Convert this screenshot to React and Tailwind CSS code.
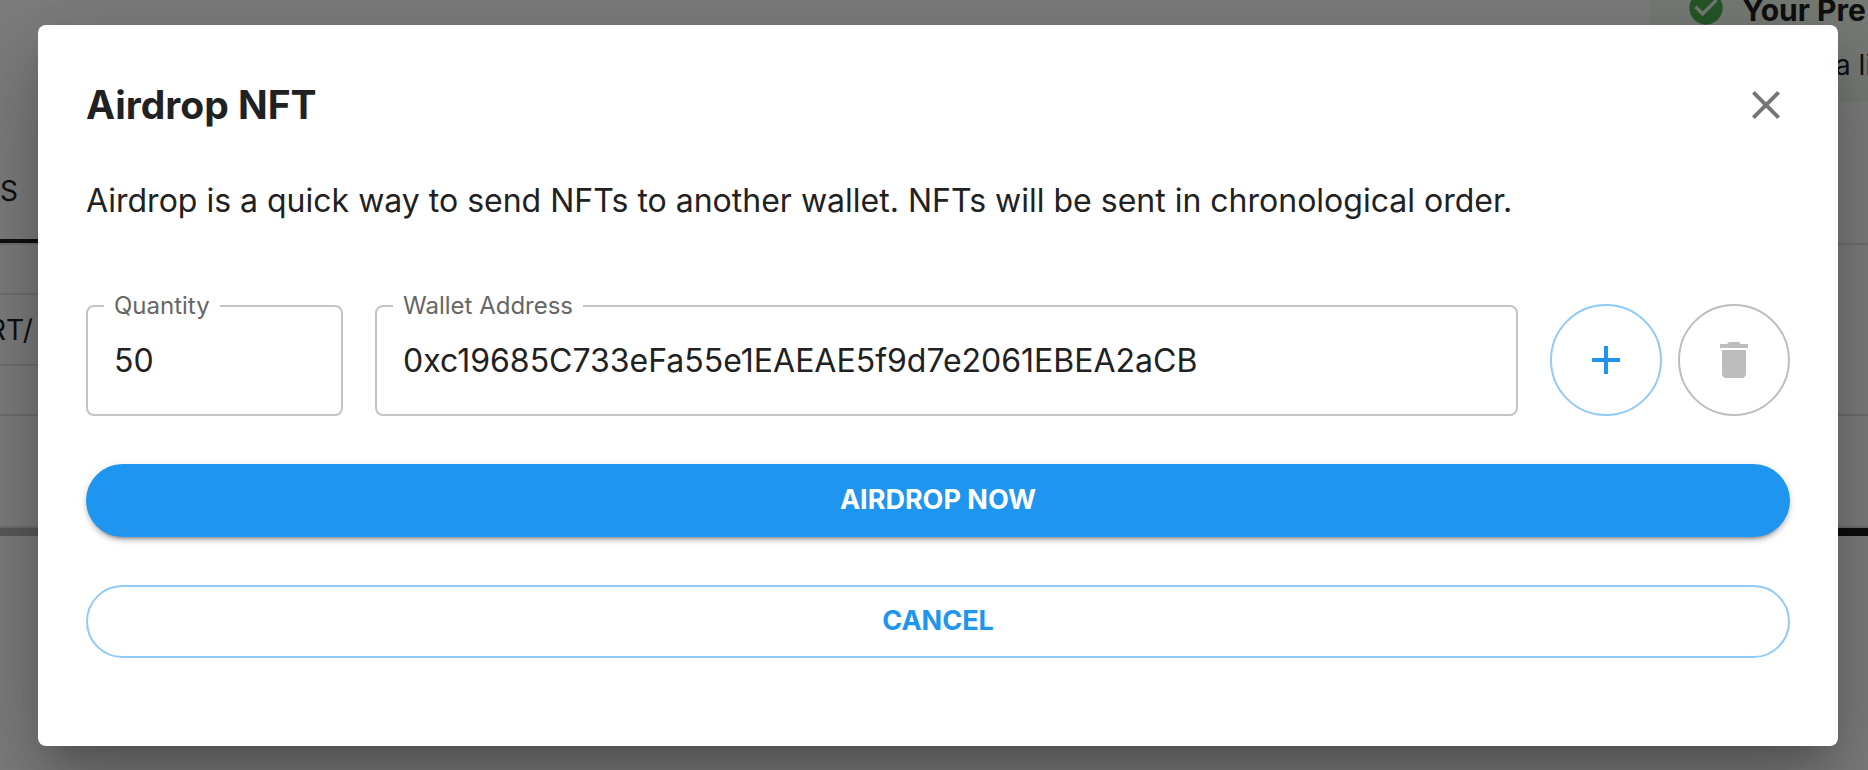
import React, { useState } from "react";

const CloseIcon = () => (
  <svg viewBox="0 0 24 24" className="h-12 w-12" fill="currentColor" aria-hidden="true">
    <path d="M19 6.410L17.590 5 12 10.590 6.410 5 5 6.410 10.590 12 5 17.590 6.410 19 12 13.410 17.590 19 19 17.590 13.410 12z" />
  </svg>
);

const AddIcon = () => (
  <svg viewBox="0 0 24 24" className="h-12 w-12" fill="currentColor" aria-hidden="true">
    <path d="M19 13h-6v6h-2v-6H5v-2h6V5h2v6h6v2z" />
  </svg>
);

const DeleteIcon = () => (
  <svg viewBox="0 0 24 24" className="h-12 w-12" fill="currentColor" aria-hidden="true">
    <path d="M6 19c0 1.100.9 2 2 2h8c1.100 0 2-.9 2-2V7H6v12zM19 4h-3.500l-1-1h-5l-1 1H5v2h14V4z" />
  </svg>
);

const CheckIcon = () => (
  <svg viewBox="0 0 24 24" className="h-10 w-10" fill="currentColor" aria-hidden="true">
    <path d="M12 2C6.480 2 2 6.480 2 12s4.480 10 10 10 10-4.480 10-10S17.520 2 12 2zm-2 15l-5-5 1.410-1.410L10 14.170l7.590-7.590L19 8l-9 9z" />
  </svg>
);

const Field = ({ id, label, value, onChange, className }) => (
  <fieldset
    className={`min-w-0 rounded-lg border-2 border-[#c4c4c4] px-4 ${className}`}
  >
    <legend className="px-2.5">
      <label htmlFor={id} className="block text-2xl leading-6 text-[#666666]">
        {label}
      </label>
    </legend>
    <input
      id={id}
      type="text"
      value={value}
      onChange={(e) => onChange(e.target.value)}
      className="mb-3 block h-[84px] w-full px-2.5 text-[32px] text-[#212121] outline-none"
    />
  </fieldset>
);

// Page that sits behind the dialog
const PageBehind = () => (
  <div className="flex min-h-screen flex-col text-[28px] text-[#212121]">
    <div className="flex h-[102px] justify-end">
      <div className="w-[218px] overflow-hidden bg-[#edf7ed] whitespace-nowrap">
        <div className="-mt-3 flex h-10 items-center gap-4 pl-9">
          <span className="shrink-0 text-[#4caf50]">
            <CheckIcon />
          </span>
          <span className="pt-1 text-3xl font-bold">Your Pre</span>
        </div>
        <p className="mt-4 pl-[185px]">a li</p>
      </div>
    </div>
    <div className="flex h-[143px] items-end border-b-2 border-[#e0e0e0]">
      <div className="flex h-[100px] w-20 items-center border-b-4 border-[#212121]">
        S
      </div>
    </div>
    <div className="flex h-[171px] flex-col justify-center border-b-2 border-[#e0e0e0]">
      <div className="flex h-[73px] w-1/2 items-center border-y-2 border-[#e0e0e0]">
        <span className="-ml-3">RT/</span>
      </div>
    </div>
    <div className="h-28 border-b-2 border-[#e0e0e0]" />
    <div className="flex h-2 justify-end bg-[#b5b5b5]">
      <div className="w-1/2 bg-[#1a1a1a]" />
    </div>
  </div>
);

const App = () => {
  const [quantity, setQuantity] = useState("50");
  const [wallet, setWallet] = useState(
    "0xc19685C733eFa55e1EAEAE5f9d7e2061EBEA2aCB"
  );

  return (
    <div className="relative h-screen overflow-hidden bg-[#fafafa] font-['Inter',sans-serif]">
      <PageBehind />

      <div className="absolute inset-0 flex items-start justify-center bg-black/50 pt-[25px] pr-[30px] pl-[38px]">
        <div
          role="dialog"
          aria-labelledby="airdrop-title"
          className="w-full rounded-lg bg-white px-12 pt-12 pb-[88px] text-[#212121] shadow-[0_22px_30px_-14px_rgba(0,0,0,0.2),0_48px_76px_6px_rgba(0,0,0,0.14),0_18px_92px_16px_rgba(0,0,0,0.12)]"
        >
          <div className="flex h-16 items-center justify-between">
            <h2 id="airdrop-title" className="text-[39px] font-bold">
              Airdrop NFT
            </h2>
            <button type="button" aria-label="Close" className="text-[#757575]">
              <CloseIcon />
            </button>
          </div>

          <p className="mt-10 text-[32px] leading-12">
            Airdrop is a quick way to send NFTs to another wallet. NFTs will be
            sent in chronological order.
          </p>

          <form onSubmit={(e) => e.preventDefault()}>
            <div className="mt-[69px] flex items-end gap-8">
              <Field
                id="quantity"
                label="Quantity"
                value={quantity}
                onChange={setQuantity}
                className="w-[257px] shrink-0"
              />
              <Field
                id="wallet"
                label="Wallet Address"
                value={wallet}
                onChange={setWallet}
                className="flex-1"
              />
              <div className="flex gap-4">
                <button
                  type="button"
                  aria-label="Add wallet"
                  className="flex h-28 w-28 items-center justify-center rounded-full border-2 border-[#90caf9] text-[#1e96ef]"
                >
                  <AddIcon />
                </button>
                <button
                  type="button"
                  aria-label="Remove wallet"
                  disabled
                  className="flex h-28 w-28 items-center justify-center rounded-full border-2 border-[#bdbdbd] text-[#bdbdbd]"
                >
                  <DeleteIcon />
                </button>
              </div>
            </div>

            <button
              type="submit"
              className="mt-12 block h-[73px] w-full rounded-full bg-[#1e96ef] text-[27px] font-bold text-white shadow-[0_6px_2px_-4px_rgba(0,0,0,0.2),0_4px_4px_0_rgba(0,0,0,0.14),0_2px_10px_0_rgba(0,0,0,0.12)]"
            >
              AIRDROP NOW
            </button>
            <button
              type="button"
              className="mt-12 block h-[73px] w-full rounded-full border-2 border-[#90caf9] text-[27px] font-bold text-[#1e96ef]"
            >
              CANCEL
            </button>
          </form>
        </div>
      </div>
    </div>
  );
};

export default App;
